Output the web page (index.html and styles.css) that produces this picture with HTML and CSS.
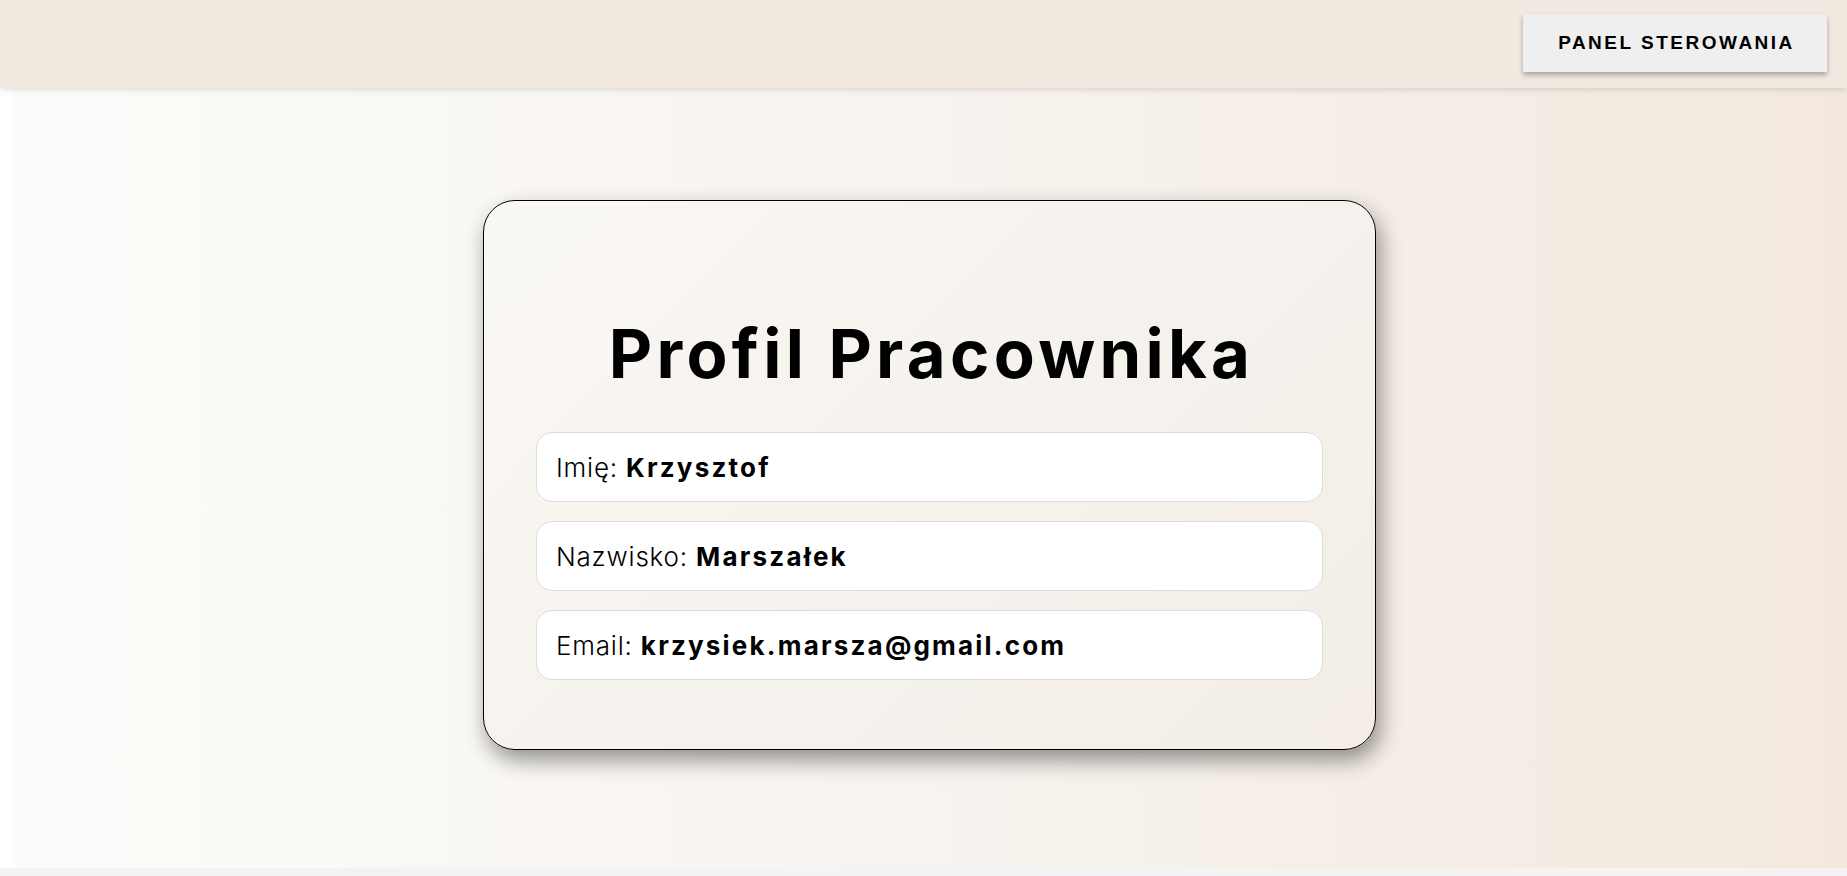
FILE: index.html
```html
<!DOCTYPE html>
<html lang="pl">
<head>
<meta charset="utf-8">
<title>Profil Pracownika</title>
<link rel="stylesheet" href="styles.css">
</head>
<body>
<header class="topbar">
  <button class="panel-btn">PANEL STEROWANIA</button>
</header>
<main class="main">
  <section class="card">
    <h1 class="title">Profil Pracownika</h1>
    <div class="rows">
      <div class="row">Imię: <strong>Krzysztof</strong></div>
      <div class="row">Nazwisko: <strong>Marszałek</strong></div>
      <div class="row">Email: <strong>krzysiek.marsza@gmail.com</strong></div>
    </div>
  </section>
</main>
<div class="bottom-strip"></div>
</body>
</html>
```
FILE: styles.css
```css
html, body {
  margin: 0;
  padding: 0;
}
body {
  background: #ffffff;
  font-family: Inter, "Open Sans", sans-serif;
  color: #000;
  height: 876px;
  display: flex;
  flex-direction: column;
  overflow: hidden;
}
.topbar {
  height: 88px;
  flex: 0 0 88px;
  box-sizing: border-box;
  background: #f2e9e0;
  display: flex;
  justify-content: flex-end;
  align-items: flex-start;
  padding: 14px 20px 0 0;
  box-shadow: 0 2px 6px rgba(0,0,0,0.12);
  position: relative;
  z-index: 2;
}
.panel-btn {
  width: 304px;
  height: 58px;
  border: none;
  background: #efefef;
  font-family: "Liberation Sans", Arial, sans-serif;
  font-weight: 700;
  font-size: 19px;
  letter-spacing: 2.5px;
  padding: 0 0 0 3px;
  color: #000;
  box-shadow: 0 3px 5px rgba(0,0,0,0.3);
  cursor: pointer;
}
.main {
  flex: 1 1 auto;
  margin-left: 12px;
  background: linear-gradient(to right, #fdfcfa 0%, #f8f5f1 40%, #f3e9df 100%);
  display: flex;
  align-items: center;
  justify-content: center;
}
.card {
  width: 893px;
  height: 550px;
  box-sizing: border-box;
  border: 1px solid #000;
  border-radius: 32px;
  background: linear-gradient(135deg, #faf8f5 0%, #f5f1ec 60%, #f3ede6 100%);
  box-shadow: 4px 10px 22px rgba(0,0,0,0.42);
  padding: 0 52px 69px;
  display: flex;
  flex-direction: column;
  justify-content: flex-end;
  margin-top: -6px;
}
.title {
  margin: 0 0 38px;
  padding-left: 4px;
  text-align: center;
  font-size: 67px;
  font-weight: 700;
  line-height: 80px;
  letter-spacing: 4.3px;
}
.rows {
  display: flex;
  flex-direction: column;
  gap: 19px;
}
.row {
  height: 70px;
  box-sizing: border-box;
  background: #ffffff;
  border: 1px solid #dcdcdc;
  border-radius: 16px;
  padding: 0 19px;
  display: flex;
  align-items: center;
  font-size: 26px;
  font-weight: 300;
  letter-spacing: 0.8px;
  white-space: pre;
}
.row strong {
  font-weight: 700;
  letter-spacing: 2.2px;
}
.bottom-strip {
  flex: 0 0 8px;
  height: 8px;
  background: #f3f3f3;
}
```
